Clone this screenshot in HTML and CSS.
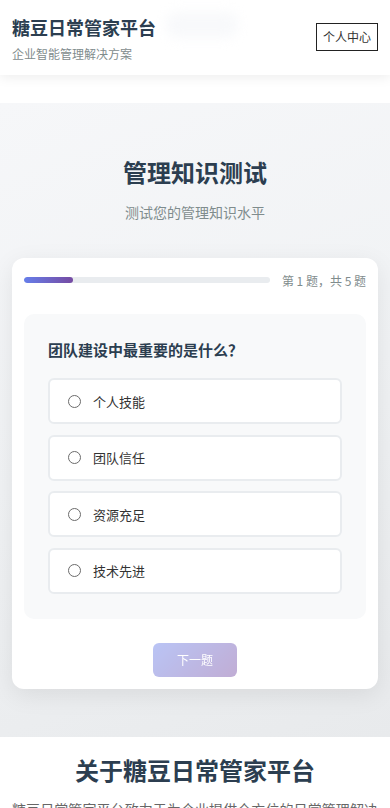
FILE: index.html
```html
<!DOCTYPE html>
<html lang="zh-CN">
<head>
<meta charset="utf-8">
<meta name="viewport" content="width=device-width, initial-scale=1">
<title>糖豆日常管家平台</title>
<link rel="stylesheet" href="styles.css">
</head>
<body>
<header class="site-header">
  <div class="brand">
    <h1 class="brand-title">糖豆日常管家平台</h1>
    <p class="brand-sub">企业智能管理解决方案</p>
  </div>
  <span class="header-glow"></span>
  <button class="user-btn">个人中心</button>
</header>

<main class="main">
  <section class="quiz-section">
    <h2 class="quiz-title">管理知识测试</h2>
    <p class="quiz-sub">测试您的管理知识水平</p>

    <div class="quiz-card">
      <div class="progress-row">
        <div class="progress-track"><div class="progress-fill" style="width:20%"></div></div>
        <span class="progress-text">第 1 题，共 5 题</span>
      </div>

      <div class="question-box">
        <h3 class="question">团队建设中最重要的是什么？</h3>
        <div class="options">
          <label class="option"><span class="radio"></span><span class="option-text">个人技能</span></label>
          <label class="option"><span class="radio"></span><span class="option-text">团队信任</span></label>
          <label class="option"><span class="radio"></span><span class="option-text">资源充足</span></label>
          <label class="option"><span class="radio"></span><span class="option-text">技术先进</span></label>
        </div>
      </div>

      <div class="actions">
        <button class="next-btn">下一题</button>
      </div>
    </div>
  </section>

  <section class="about">
    <h2 class="about-title">关于糖豆日常管家平台</h2>
    <p class="about-text">糖豆日常管家平台致力于为企业提供全方位的日常管理解决方案，帮助管理者提升团队效率，优化工作流程，实现智能化、数字化的企业管理。</p>
  </section>
</main>
</body>
</html>
```

FILE: styles.css
```css
* {
  box-sizing: border-box;
}

html, body {
  margin: 0;
  padding: 0;
  background: #ffffff;
}

body {
  font-family: "Noto Sans CJK SC", "Noto Sans", "Liberation Sans", sans-serif;
  color: #2c3e50;
}

.site-header {
  position: relative;
  display: flex;
  align-items: center;
  justify-content: space-between;
  height: 75px;
  padding: 2px 12px 0 12px;
  background: #ffffff;
  box-shadow: 0 2px 12px rgba(0, 0, 0, 0.08);
  z-index: 2;
}

.brand-title {
  margin: 0;
  font-size: 18px;
  line-height: 27px;
  font-weight: 700;
  color: #2c3e50;
}

.brand-sub {
  margin: 4px 0 0;
  font-size: 12px;
  line-height: 18px;
  color: #7f8c8d;
}

.header-glow {
  position: absolute;
  left: 166px;
  top: 12px;
  width: 72px;
  height: 26px;
  border-radius: 10px;
  background: #f8f9fb;
  filter: blur(6px);
}

.user-btn {
  height: 28px;
  padding: 0 6px;
  border: 1px solid #222;
  border-radius: 0;
  background: #ffffff;
  font-family: inherit;
  font-size: 12px;
  color: #333;
  line-height: 26px;
  margin-top: -3px;
}

.main {
  margin-top: 28px;
}

.quiz-section {
  padding: 51px 12px 48px;
  background: linear-gradient(160deg, #f6f7f9 0%, #f0f2f4 50%, #e8eaec 100%);
  text-align: center;
}

.quiz-title {
  margin: 0;
  font-size: 24px;
  line-height: 36px;
  font-weight: 700;
  color: #2c3e50;
}

.quiz-sub {
  margin: 12px 0 0;
  font-size: 14px;
  line-height: 21px;
  color: #7f8c8d;
}

.quiz-card {
  margin-top: 35px;
  padding: 12px;
  background: #ffffff;
  border-radius: 12px;
  box-shadow: 0 6px 24px rgba(0, 0, 0, 0.08);
  text-align: left;
}

.progress-row {
  display: flex;
  align-items: center;
  gap: 12px;
  height: 20px;
}

.progress-track {
  flex: 1;
  height: 6px;
  border-radius: 3px;
  background: #e9ecef;
  overflow: hidden;
}

.progress-fill {
  height: 100%;
  border-radius: 3px;
  background: linear-gradient(90deg, #667eea, #764ba2);
}

.progress-text {
  flex: none;
  font-size: 12px;
  color: #7f8c8d;
}

.question-box {
  margin-top: 24px;
  padding: 24px 24px 25px;
  background: #f8f9fa;
  border-radius: 10px;
}

.question {
  margin: 0;
  font-size: 15px;
  line-height: 24px;
  font-weight: 700;
  color: #2c3e50;
}

.options {
  margin-top: 16px;
  display: flex;
  flex-direction: column;
  gap: 10.6px;
}

.option {
  display: flex;
  align-items: center;
  height: 46px;
  padding: 0 18px;
  background: #ffffff;
  border: 2px solid #e9ecef;
  border-radius: 6px;
}

.radio {
  width: 13px;
  height: 13px;
  border: 1.2px solid #6b6b6b;
  border-radius: 50%;
  flex: none;
  margin-right: 12px;
}

.option-text {
  font-size: 13px;
  color: #333;
}

.actions {
  margin-top: 24px;
  display: flex;
  justify-content: center;
}

.next-btn {
  height: 34px;
  padding: 0 24px;
  border: none;
  border-radius: 6px;
  background: linear-gradient(135deg, #667eea, #764ba2);
  opacity: 0.45;
  font-family: inherit;
  font-size: 12px;
  color: #ffffff;
}

.about {
  padding: 15px 12px 20px;
  background: #ffffff;
}

.about-title {
  margin: 0;
  text-align: center;
  font-size: 24px;
  line-height: 36px;
  font-weight: 700;
  color: #2c3e50;
}

.about-text {
  margin: 10px 0 0;
  font-size: 14px;
  line-height: 1.7;
  color: #666;
  text-align: justify;
}
```
